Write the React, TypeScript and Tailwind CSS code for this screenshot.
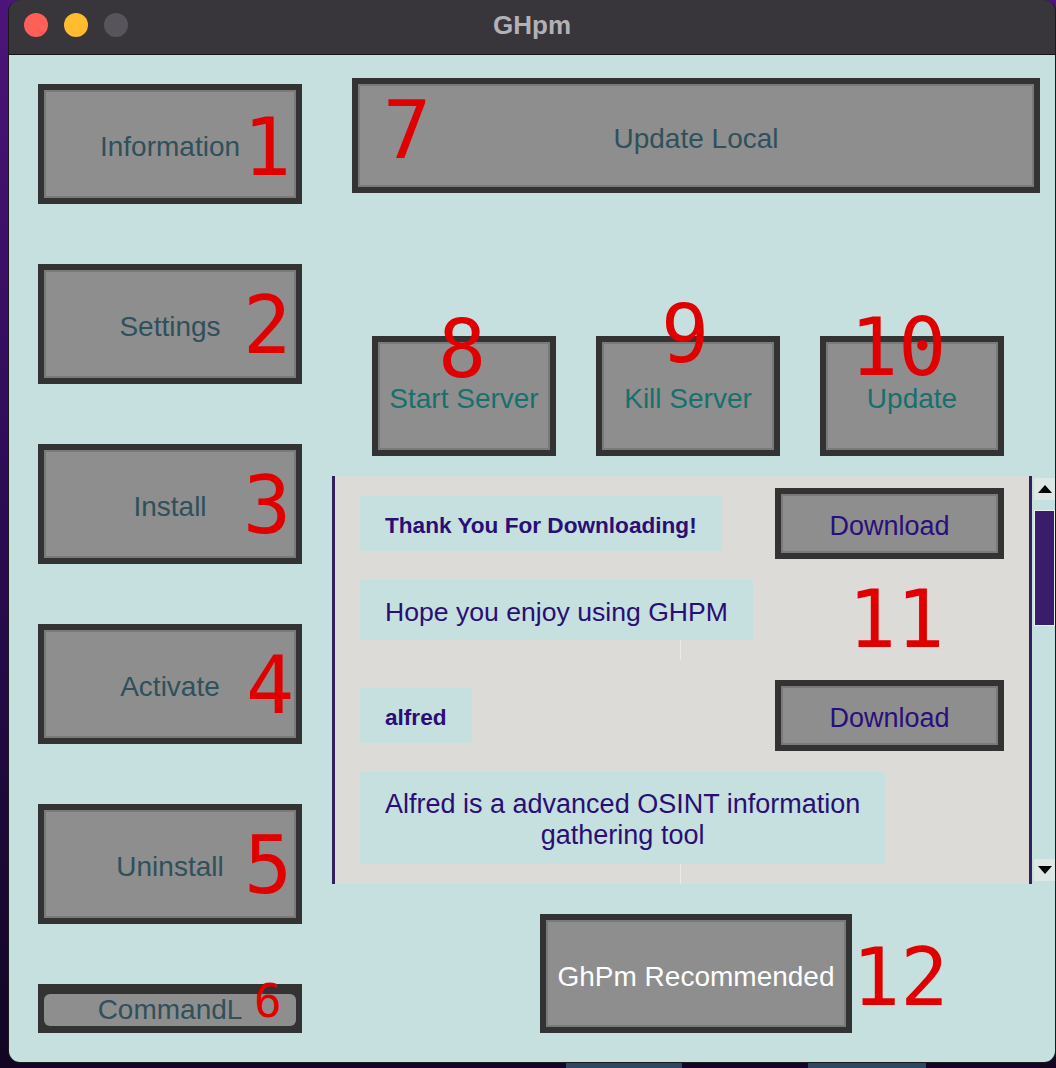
import React from "react";

const sans = { fontFamily: '"Liberation Sans", Arial, sans-serif' };

function Btn({ label, className, text }: { label: string; className: string; text: string }) {
    return (
        <div className={`border-[6px] border-[#333333] ${className}`}>
            <div className="flex h-full w-full items-center justify-center border-2 border-[#7a7a7a] bg-[#8e8e8e]">
                <span className={`translate-y-[3px] ${text}`}>{label}</span>
            </div>
        </div>
    );
}

function Mark({ n, className }: { n: string; className: string }) {
    return (
        <div
            className={`pointer-events-none absolute leading-none text-[#e00000] ${className}`}
            style={{ fontFamily: '"DejaVu Sans Mono", monospace' }}
        >
            {n}
        </div>
    );
}

function Arrow({ down }: { down?: boolean }) {
    return (
        <div className="flex h-[22px] w-[21px] items-center justify-center bg-[#dde8e6]">
            <svg width="14" height="8" viewBox="0 0 14 8">
                {down ? <polygon points="0,0 14,0 7,8" fill="#000" /> : <polygon points="0,8 14,8 7,0" fill="#000" />}
            </svg>
        </div>
    );
}

const sideText = "text-[28px] text-[#30505c]";
const serverText = "text-[28px] text-[#17706f]";
const dlText = "text-[27px] text-[#2a0f78]";

export default function App() {
    return (
        <div
            className="relative h-[1068px] w-[1056px] overflow-hidden bg-gradient-to-b from-[#4d1479] via-[#2a0b52] to-[#120624]"
            style={sans}
        >
            <div className="absolute bottom-0 left-[566px] h-[6px] w-[116px] bg-[#2b4a5e]" />
            <div className="absolute bottom-0 left-[808px] h-[6px] w-[118px] bg-[#2b4a5e]" />

            <div className="relative ml-[8px] flex h-[1063px] w-[1048px] flex-col overflow-hidden rounded-[12px] border-x border-b border-[#1a1a1c]">
                {/* title bar */}
                <div className="grid h-[55px] shrink-0 grid-cols-[1fr_auto_1fr] items-center border-b border-[#151517] bg-[#38353b] pb-[4px]">
                    <div className="flex items-center gap-[16px] pl-[15px]">
                        <div className="h-[24px] w-[24px] rounded-full bg-[#fe5f57]" />
                        <div className="h-[24px] w-[24px] rounded-full bg-[#febc2e]" />
                        <div className="h-[24px] w-[24px] rounded-full bg-[#57555b]" />
                    </div>
                    <div className="text-[26px] font-bold text-[#b2b1b5]">GHpm</div>
                    <div />
                </div>

                {/* content */}
                <div className="flex flex-1 bg-[#c5e0de]">
                    <div className="ml-[29px] flex w-[264px] shrink-0 flex-col gap-[60px] pt-[29px]">
                        <Btn label="Information" className="h-[120px]" text={sideText} />
                        <Btn label="Settings" className="h-[120px]" text={sideText} />
                        <Btn label="Install" className="h-[120px]" text={sideText} />
                        <Btn label="Activate" className="h-[120px]" text={sideText} />
                        <Btn label="Uninstall" className="h-[120px]" text={sideText} />
                        <div className="bg-[#333333] px-[6px] pb-[7px] pt-[10px]">
                            <div className="flex h-[32px] items-center justify-center rounded-md bg-[#8e8e8e]">
                                <span className={sideText}>CommandL</span>
                            </div>
                        </div>
                    </div>

                    <div className="ml-[30px] flex flex-1 flex-col">
                        <Btn label="Update Local" className="ml-[20px] mt-[23px] h-[115px] w-[688px]" text={sideText} />
                        <div className="ml-[40px] mt-[143px] flex gap-[40px]">
                            <Btn label="Start Server" className="h-[120px] w-[184px]" text={serverText} />
                            <Btn label="Kill Server" className="h-[120px] w-[184px]" text={serverText} />
                            <Btn label="Update" className="h-[120px] w-[184px]" text={serverText} />
                        </div>

                        {/* list panel */}
                        <div className="mt-[20px] flex h-[408px]">
                            <div className="w-[3px] bg-[#35205e]" />
                            <div className="flex flex-1 flex-col overflow-hidden bg-[#dcdbd7] pl-[25px] pr-[25px] pt-[12px] text-[#2a0e75]">
                                <div className="flex h-[71px] shrink-0 items-center justify-between">
                                    <div className="bg-[#c5e0de] px-[25px] pb-[13px] pt-[17px] text-[22.6px] font-bold leading-[25px]">
                                        Thank You For Downloading!
                                    </div>
                                    <Btn label="Download" className="h-[71px] w-[229px]" text={dlText} />
                                </div>
                                <div className="mt-[21px] self-start bg-[#c5e0de] px-[25px] pb-[13px] pt-[17px] text-[26.6px] leading-[30px]">
                                    Hope you enjoy using GHPM
                                </div>
                                <div className="ml-[320px] h-[20px] w-px shrink-0 bg-[#ecebe7]" />
                                <div className="mt-[20px] flex h-[71px] shrink-0 items-center justify-between">
                                    <div className="bg-[#c5e0de] px-[25px] pb-[13px] pt-[17px] text-[22.6px] font-bold leading-[25px]">
                                        alfred
                                    </div>
                                    <Btn label="Download" className="h-[71px] w-[229px]" text={dlText} />
                                </div>
                                <div className="mt-[21px] self-start bg-[#c5e0de] px-[25px] pb-[13px] pt-[17px] text-center text-[27px] leading-[31px]">
                                    Alfred is a advanced OSINT information
                                    <br />
                                    gathering tool
                                </div>
                                <div className="ml-[320px] h-[20px] w-px shrink-0 bg-[#ecebe7]" />
                            </div>
                            <div className="w-[3px] bg-[#35205e]" />
                            <div className="flex w-[23px] flex-col pb-[3px] pl-[2px] pt-[2px]">
                                <Arrow />
                                <div className="mt-[10px] h-[116px] w-[21px] border border-[#e8eeee] bg-[#3a1d6a]" />
                                <div className="flex-1" />
                                <Arrow down />
                            </div>
                        </div>

                        <Btn
                            label="GhPm Recommended"
                            className="ml-[208px] mt-[30px] h-[119px] w-[312px]"
                            text="text-[28px] text-white"
                        />
                    </div>
                </div>
            </div>

            <Mark n="1" className="left-[243px] top-[108px] text-[80px]" />
            <Mark n="2" className="left-[243px] top-[286px] text-[80px]" />
            <Mark n="3" className="left-[243px] top-[466px] text-[80px]" />
            <Mark n="4" className="left-[246px] top-[646px] text-[80px]" />
            <Mark n="5" className="left-[244px] top-[826px] text-[80px]" />
            <Mark n="6" className="left-[254px] top-[978px] text-[46px]" />
            <Mark n="7" className="left-[383px] top-[91px] text-[80px]" />
            <Mark n="8" className="left-[438px] top-[310px] text-[80px]" />
            <Mark n="9" className="left-[661px] top-[295px] text-[80px]" />
            <Mark n="10" className="left-[850px] top-[308px] text-[80px]" />
            <Mark n="11" className="left-[848px] top-[580px] text-[80px]" />
            <Mark n="12" className="left-[852px] top-[938px] text-[80px]" />
        </div>
    );
}
